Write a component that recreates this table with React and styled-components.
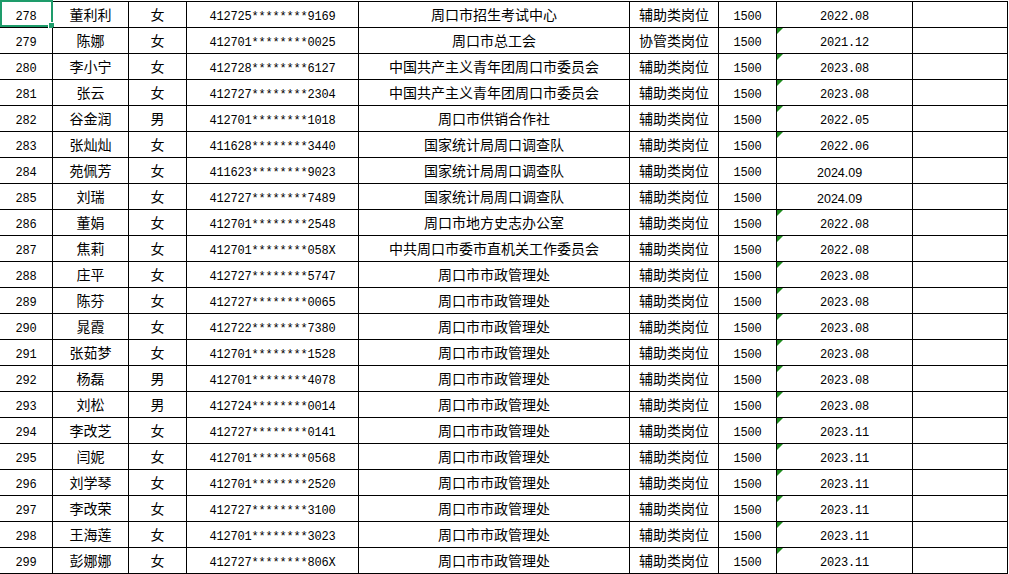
import styled, { createGlobalStyle, css } from 'styled-components';

const GlobalStyle = createGlobalStyle`
  html, body {
    margin: 0;
    padding: 0;
    background: #fff;
  }
  body {
    font-family: "Noto Sans CJK SC", "Liberation Sans", sans-serif;
    color: #000;
  }
`;

const COLS = '53px 76px 58px 172px 271px 89px 58px 136px 95px';

const Sheet = styled.div`
  width: 1008px;
  padding-top: 1px;
  overflow: hidden;
`;

const Grid = styled.div`
  border-top: 1px solid #000;
`;

const Row = styled.div`
  display: grid;
  grid-template-columns: ${COLS};
  height: 26px;
`;

const Cell = styled.div`
  position: relative;
  box-sizing: border-box;
  height: 26px;
  border-right: 1px solid #000;
  border-bottom: 1px solid #000;
  display: flex;
  align-items: center;
  justify-content: center;
  white-space: nowrap;
  font-size: 14px;
  line-height: 1;
  padding-bottom: 2px;

  ${p => p.$mono && css`
    font-family: "Liberation Mono", "DejaVu Sans Mono", monospace;
    font-size: 12px;
    letter-spacing: -0.2px;
    padding-bottom: 0;
    padding-top: 5px;
  `}

  ${p => p.$plain && css`
    font-family: "Liberation Sans", Arial, sans-serif;
    font-size: 12.5px;
    letter-spacing: 0;
    justify-content: flex-start;
    padding-left: 40px;
  `}

  ${p => p.$tick && css`
    &::before {
      content: '';
      position: absolute;
      left: 0;
      top: 0;
      border-top: 6px solid #1d8a1d;
      border-right: 6px solid transparent;
    }
  `}
`;

const Selection = styled.div`
  position: absolute;
  left: 0;
  top: -2px;
  width: 53px;
  height: 27px;
  box-sizing: border-box;
  border: 2px solid #1e9c6b;
  pointer-events: none;

  &::after {
    content: '';
    position: absolute;
    right: -4px;
    bottom: -4px;
    width: 5px;
    height: 5px;
    background: #1e9c6b;
    border: 1px solid #fff;
  }
`;

const ORG_TAX = '周口市市政管理处';
const AID = '辅助类岗位';

const rows = [
  ['278', '董利利', '女', '412725********9169', '周口市招生考试中心', AID, '2022.08'],
  ['279', '陈娜', '女', '412701********0025', '周口市总工会', '协管类岗位', '2021.12'],
  ['280', '李小宁', '女', '412728********6127', '中国共产主义青年团周口市委员会', AID, '2023.08'],
  ['281', '张云', '女', '412727********2304', '中国共产主义青年团周口市委员会', AID, '2023.08'],
  ['282', '谷金润', '男', '412701********1018', '周口市供销合作社', AID, '2022.05'],
  ['283', '张灿灿', '女', '411628********3440', '国家统计局周口调查队', AID, '2022.06'],
  ['284', '苑佩芳', '女', '411623********9023', '国家统计局周口调查队', AID, '2024.09'],
  ['285', '刘瑞', '女', '412727********7489', '国家统计局周口调查队', AID, '2024.09'],
  ['286', '董娟', '女', '412701********2548', '周口市地方史志办公室', AID, '2022.08'],
  ['287', '焦莉', '女', '412701********058X', '中共周口市委市直机关工作委员会', AID, '2022.08'],
  ['288', '庄平', '女', '412727********5747', ORG_TAX, AID, '2023.08'],
  ['289', '陈芬', '女', '412727********0065', ORG_TAX, AID, '2023.08'],
  ['290', '晁霞', '女', '412722********7380', ORG_TAX, AID, '2023.08'],
  ['291', '张茹梦', '女', '412701********1528', ORG_TAX, AID, '2023.08'],
  ['292', '杨磊', '男', '412701********4078', ORG_TAX, AID, '2023.08'],
  ['293', '刘松', '男', '412724********0014', ORG_TAX, AID, '2023.08'],
  ['294', '李改芝', '女', '412727********0141', ORG_TAX, AID, '2023.11'],
  ['295', '闫妮', '女', '412701********0568', ORG_TAX, AID, '2023.11'],
  ['296', '刘学琴', '女', '412701********2520', ORG_TAX, AID, '2023.11'],
  ['297', '李改荣', '女', '412727********3100', ORG_TAX, AID, '2023.11'],
  ['298', '王海莲', '女', '412701********3023', ORG_TAX, AID, '2023.11'],
  ['299', '彭娜娜', '女', '412727********806X', ORG_TAX, AID, '2023.11'],
];

const numericDate = new Set(['284', '285']);

const App = () => (
  <>
    <GlobalStyle />
    <Sheet>
      <Grid>
        {rows.map(([no, name, sex, id, org, post, date], i) => {
          const plain = numericDate.has(no);
          return (
            <Row key={no}>
              <Cell $mono>
                {no}
                {i === 0 && <Selection />}
              </Cell>
              <Cell>{name}</Cell>
              <Cell>{sex}</Cell>
              <Cell $mono>{id}</Cell>
              <Cell>{org}</Cell>
              <Cell>{post}</Cell>
              <Cell $mono>1500</Cell>
              <Cell $mono $plain={plain} $tick={i > 0 && !plain}>{date}</Cell>
              <Cell />
            </Row>
          );
        })}
      </Grid>
    </Sheet>
  </>
);

export default App;
